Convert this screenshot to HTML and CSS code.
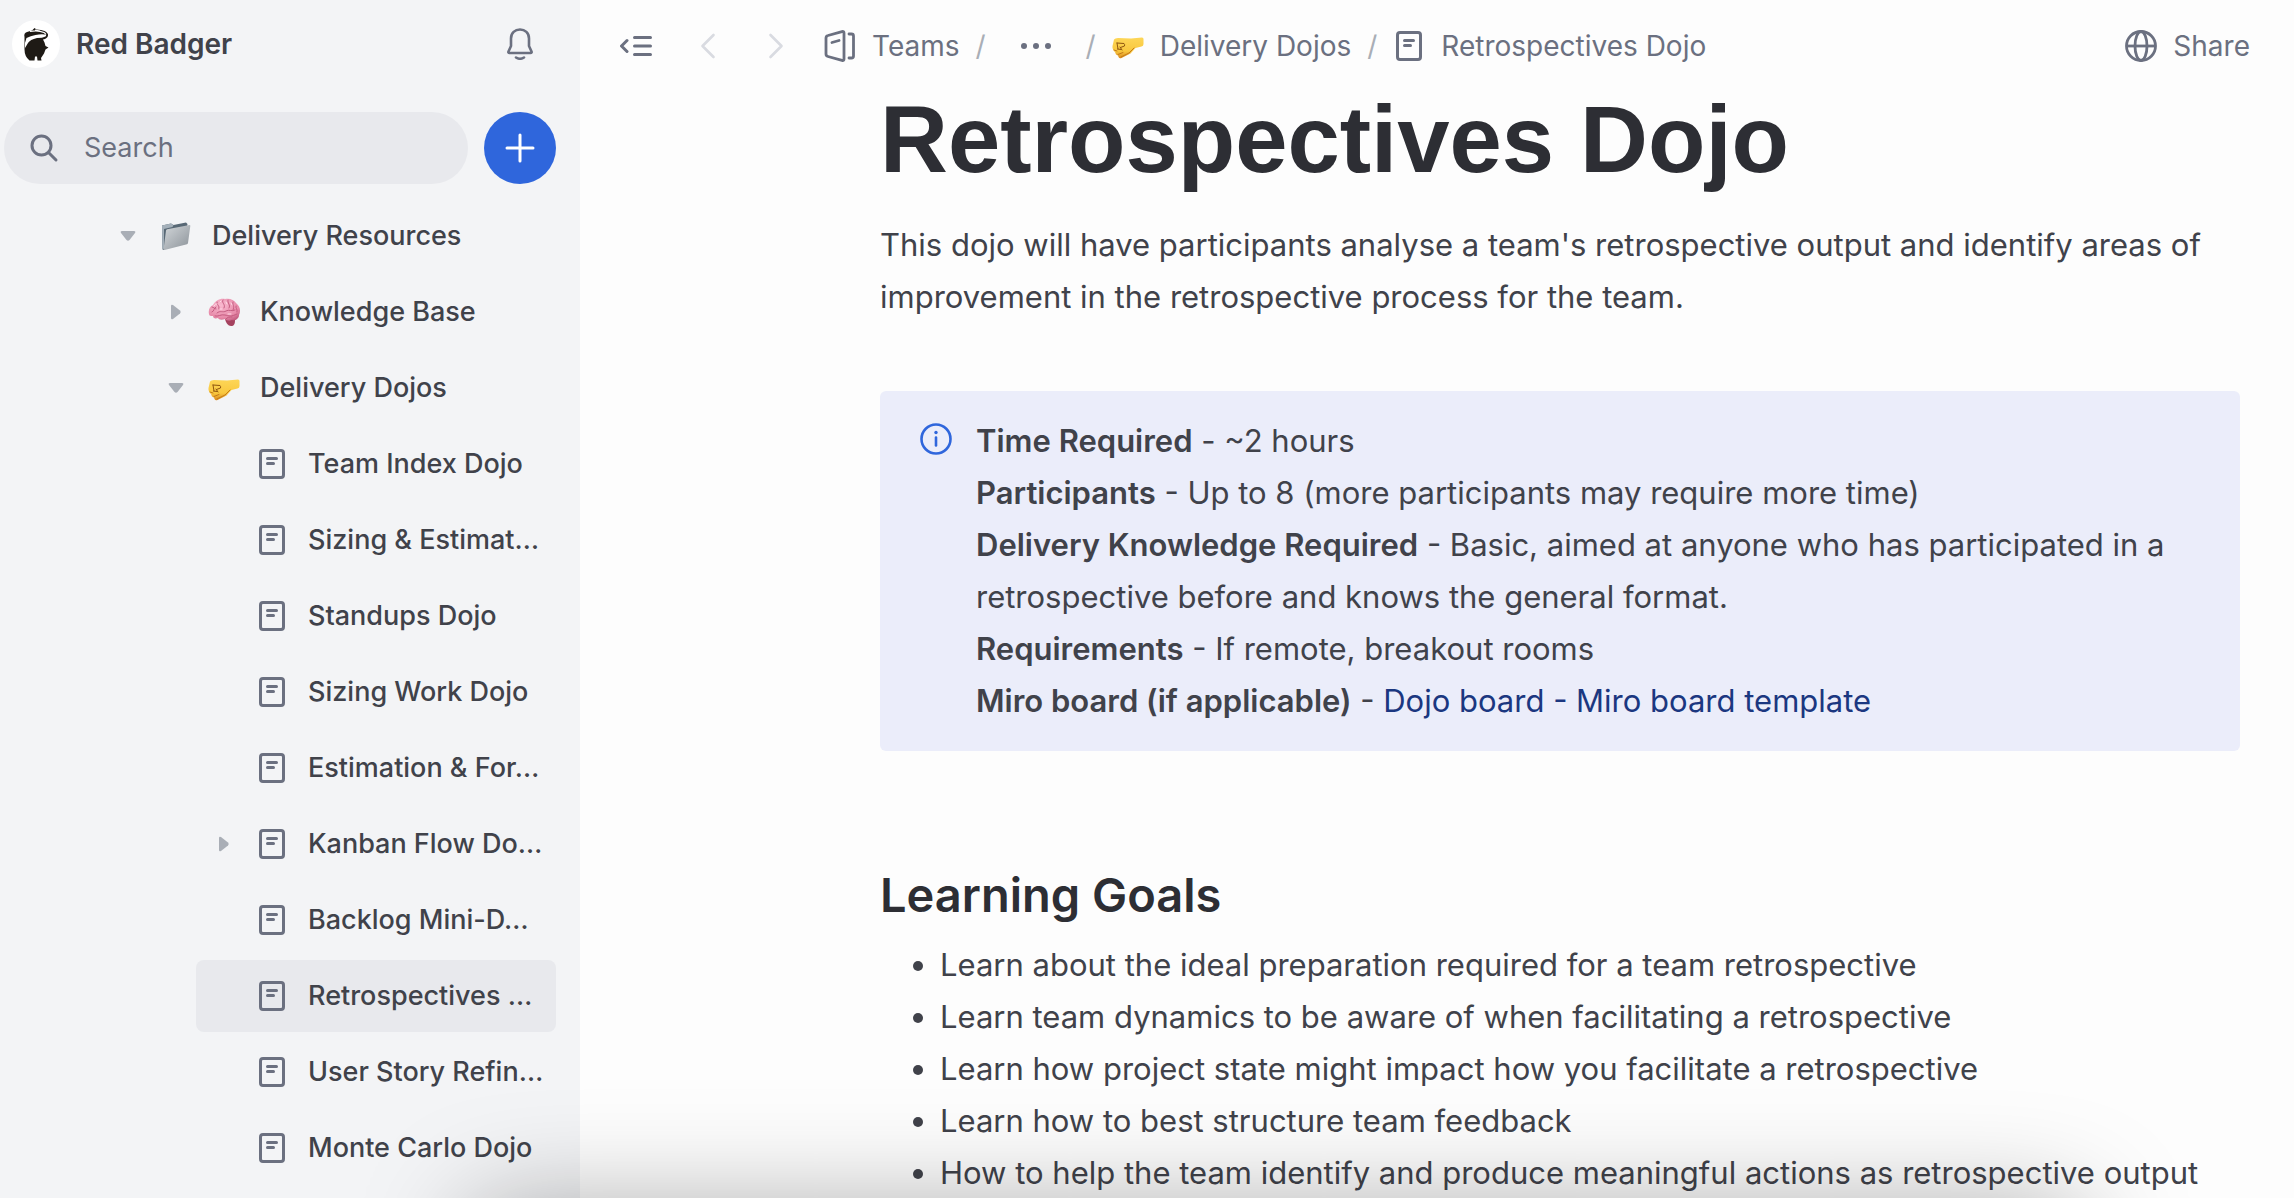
FILE: index.html
```html
<!DOCTYPE html>
<html lang="en">
<head>
<meta charset="utf-8">
<meta name="viewport" content="width=device-width, initial-scale=1">
<title>Retrospectives Dojo</title>
<link rel="stylesheet" href="styles.css">
</head>
<body>
<svg class="sprite" aria-hidden="true">
  <defs>
    <linearGradient id="folder-front" x1="0" y1="0" x2="1" y2="1">
      <stop offset="0" stop-color="#d3d7da"/><stop offset="1" stop-color="#8b9299"/>
    </linearGradient>
    <radialGradient id="brain-fill" cx=".4" cy=".3" r=".8">
      <stop offset="0" stop-color="#f9b9cf"/><stop offset=".7" stop-color="#e78aa9"/><stop offset="1" stop-color="#c0587c"/>
    </radialGradient>
    <linearGradient id="fist-fill" x1="0" y1="0" x2="0" y2="1">
      <stop offset="0" stop-color="#fdd657"/><stop offset=".65" stop-color="#f9c83f"/><stop offset="1" stop-color="#d98a1e"/>
    </linearGradient>
    <symbol id="doc" viewBox="0 0 32 32">
      <g fill="none" stroke="currentColor" stroke-width="3" stroke-linecap="round" stroke-linejoin="round">
        <rect x="4.500" y="2.500" width="23" height="27" rx="2.500"/><path d="M11.500 10.500h9M11.500 15.500h6"/>
      </g>
    </symbol>
    <symbol id="caret-down" viewBox="0 0 16 16">
      <path d="M2 3h12q2 0 1 2L9.500 12q-1.500 1.500-3 0L1 5Q0 3 2 3z" fill="#a9aeb6"/>
    </symbol>
    <symbol id="caret-right" viewBox="0 0 16 16">
      <path d="M3 2v12q0 2 2 1l7-5.500q1.500-1.500 0-3L5 1Q3 0 3 2z" fill="#a9aeb6"/>
    </symbol>
    <symbol id="folder" viewBox="0 0 32 32">
      <path d="M2 5.500 11 3.500l2.500 1.500L26 2.500l1.500 1.500-1 6L4 30l-1.500-.5z" fill="#586875"/>
      <path d="M2 5.500 11 3.500l2.500 1.500-1 2L4 9v20l-1.500-.5z" fill="#a4b0ba"/>
      <path d="M6 10.500q.2-1 1.200-1.300L29.500 5q1 0 .8 1L28 23q-.2 1-1 1.300L4.500 30q-1 .1-.9-1z" fill="url(#folder-front)"/>
    </symbol>
    <symbol id="brain" viewBox="0 0 32 32">
      <path d="M17 23c1 4 3 7 6 7 3 0 4-2 4-6z" fill="#a5425f"/>
      <path d="M1 18c-1-4 1-8 4-9C7 5 12 2 17 3c5-1 9 1 11 4 4 3 5 8 3 12 0 4-4 6-7 5-2 1-5 1-7-1-3 1-6 1-7-1-3 1-5 0-5-2-2 0-4 0-4-2z" fill="url(#brain-fill)"/>
      <g fill="none" stroke="#c45c80" stroke-width="1" stroke-linecap="round">
        <path d="M4 16c3-1 1-4 4-5M9 6c-1 3 3 3 2 7M15 4c-2 3 3 4 1 8M20 4c-1 3 3 5 1 8M25 6c-1 3 2 4 0 8M9 17c3-3 6 0 9-2s6 1 9-1M7 20c3 1 6-2 10-1s6 2 12-1M18 23c1-2 4-2 6-2M4 11c2 0 2 2 4 2M28 10c-1 2 2 3 1 6"/>
      </g>
      <path d="M6 10c1-2 2-2 3-2M12 6l1-1M18 6l1 2M23 7l1 2M12 13l2 0M20 18l3 0" fill="none" stroke="#ffdbe7" stroke-width="1" stroke-linecap="round"/>
    </symbol>
    <symbol id="fist" viewBox="0 0 32 32">
      <path d="M2 9.500Q3 8 6 8l13 .5L30 7.500q1.500 0 1.500 1.500v5q0 2-2 2.500l-6 1.500-5 5.500-9 4.500q-2 1-3-1l-.5-1.500-2-1-1-2.500-1.500-1.500Q0 18 .5 16z" fill="url(#fist-fill)"/>
      <path d="m5 13 7 .5q1 1 .5 2.500l-4 1.500M5 13l1 6M8 17l2 3M5.500 19l3.500.5" fill="none" stroke="#8e560f" stroke-width="1" stroke-linecap="round"/>
      <path d="M2 20l3 1M6 24.500l5-2M9 27l8-4 5-5" fill="none" stroke="#c47a19" stroke-width="1" stroke-linecap="round"/>
    </symbol>
  </defs>
</svg>

<div class="app">
  <aside class="sidebar">
    <header class="workspace">
      <a class="brand" href="#">
        <svg class="brand-logo" viewBox="0 0 48 48" aria-hidden="true">
          <circle cx="24" cy="24" r="24" fill="#fff"/>
          <path d="M12.500 17Q11.500 13 15 12l5-1.500 2.500-2.500 2 1.500q5 0 8 1.500 4 2 3.500 4.500-.5 3-5 4l1.500 3 1 3.500 3 1.500-3 2-1.500 4-3 4.500.5 2.500h-4l-.5-4h-2l-.5 4h-5q-5-4-5-11z" fill="#1e1a15"/>
          <path d="M13 28q-.5-6 1.500-10 4-2 9-3 5-1 9.500-.5 2 .5.500 2-3 1.500-8.500 1.500-7 1.500-9 5z" fill="#fff"/>
          <path d="M18 11.500q8-1.500 14 1 1 .5 2 2M23 10l5 1" fill="none" stroke="#fff" stroke-width="1.200"/>
        </svg>
        <span>Red Badger</span>
      </a>
      <button class="icon-button" type="button" aria-label="Notifications">
        <svg class="icon" viewBox="0 0 32 32" fill="none" stroke="currentColor" stroke-width="2.600" stroke-linejoin="round" stroke-linecap="round" aria-hidden="true">
          <path d="M4.500 23.500 7 18v-7.500C7 5 11 1.500 16 1.500S25 5 25 10.500V18l2.500 5.500q.5 1.500-1 1.500h-21q-1.500 0-1-1.500zM12 29.500q4 2.500 8 0"/>
        </svg>
      </button>
    </header>

    <div class="search-row">
      <label class="search">
        <svg class="icon" viewBox="0 0 32 32" fill="none" stroke="currentColor" stroke-width="3" stroke-linecap="round" aria-hidden="true">
          <circle cx="13.500" cy="13.500" r="9.500"/><path d="m21 21 7 7"/>
        </svg>
        <input type="search" placeholder="Search" aria-label="Search">
      </label>
      <button class="create" type="button" aria-label="Create">
        <svg class="icon" viewBox="0 0 32 32" fill="none" stroke="currentColor" stroke-width="3" stroke-linecap="round" aria-hidden="true"><path d="M16 3v26M3 16h26"/></svg>
      </button>
    </div>

    <nav aria-label="Pages">
      <ul class="tree">
        <li>
          <a class="node" href="#"><span class="toggle"><svg><use href="#caret-down"/></svg></span><svg class="icon"><use href="#folder"/></svg><span class="label">Delivery Resources</span></a>
          <ul class="tree">
            <li><a class="node" href="#"><span class="toggle"><svg><use href="#caret-right"/></svg></span><svg class="icon"><use href="#brain"/></svg><span class="label">Knowledge Base</span></a></li>
            <li>
              <a class="node" href="#"><span class="toggle"><svg><use href="#caret-down"/></svg></span><svg class="icon"><use href="#fist"/></svg><span class="label">Delivery Dojos</span></a>
              <ul class="tree">
                <li><a class="node" href="#"><span class="toggle"></span><svg class="icon"><use href="#doc"/></svg><span class="label">Team Index Dojo</span></a></li>
                <li><a class="node" href="#"><span class="toggle"></span><svg class="icon"><use href="#doc"/></svg><span class="label">Sizing &amp; Estimat…</span></a></li>
                <li><a class="node" href="#"><span class="toggle"></span><svg class="icon"><use href="#doc"/></svg><span class="label">Standups Dojo</span></a></li>
                <li><a class="node" href="#"><span class="toggle"></span><svg class="icon"><use href="#doc"/></svg><span class="label">Sizing Work Dojo</span></a></li>
                <li><a class="node" href="#"><span class="toggle"></span><svg class="icon"><use href="#doc"/></svg><span class="label">Estimation &amp; For…</span></a></li>
                <li><a class="node" href="#"><span class="toggle"><svg><use href="#caret-right"/></svg></span><svg class="icon"><use href="#doc"/></svg><span class="label">Kanban Flow Do…</span></a></li>
                <li><a class="node" href="#"><span class="toggle"></span><svg class="icon"><use href="#doc"/></svg><span class="label">Backlog Mini-D…</span></a></li>
                <li><a class="node current" href="#" aria-current="page"><span class="toggle"></span><svg class="icon"><use href="#doc"/></svg><span class="label">Retrospectives …</span></a></li>
                <li><a class="node" href="#"><span class="toggle"></span><svg class="icon"><use href="#doc"/></svg><span class="label">User Story Refin…</span></a></li>
                <li><a class="node" href="#"><span class="toggle"></span><svg class="icon"><use href="#doc"/></svg><span class="label">Monte Carlo Dojo</span></a></li>
              </ul>
            </li>
          </ul>
        </li>
      </ul>
    </nav>
  </aside>

  <main class="main">
    <header class="topbar">
      <button class="icon-button collapse" type="button" aria-label="Collapse sidebar">
        <svg class="icon" viewBox="0 0 32 32" fill="none" stroke="currentColor" stroke-width="3" stroke-linecap="round" stroke-linejoin="round" aria-hidden="true"><path d="M14.500 7.500h16M14.500 16h16M14.500 24.500h16M7 10.500 1.500 16 7 21.500"/></svg>
      </button>
      <div class="history">
        <button class="icon-button" type="button" aria-label="Back" disabled>
          <svg class="icon" viewBox="0 0 32 32" fill="none" stroke="currentColor" stroke-width="2.600" stroke-linecap="round" stroke-linejoin="round" aria-hidden="true"><path d="M21.500 5 10.500 16l11 11"/></svg>
        </button>
        <button class="icon-button" type="button" aria-label="Forward" disabled>
          <svg class="icon" viewBox="0 0 32 32" fill="none" stroke="currentColor" stroke-width="2.600" stroke-linecap="round" stroke-linejoin="round" aria-hidden="true"><path d="m10.500 5 11 11-11 11"/></svg>
        </button>
      </div>
      <nav class="crumbs" aria-label="Breadcrumb">
        <a class="crumb" href="#">
          <svg class="icon" viewBox="0 0 32 32" fill="none" stroke="currentColor" stroke-width="2.800" stroke-linecap="round" stroke-linejoin="round" aria-hidden="true"><path d="M4 5.500 18 1.600q2-.5 2 1.400v26q0 2-2 1.400L4 26.500Q2 26 2 24V8q0-2 2-2.500zM8 12.500l7-2M25 4h2.500q2 0 2 2v20q0 2-2 2H25"/></svg>
          <span>Teams</span>
        </a>
        <span class="slash">/</span>
        <button class="icon-button more" type="button" aria-label="Show hidden pages">
          <svg class="icon" viewBox="0 0 32 32" fill="currentColor" aria-hidden="true"><circle cx="4" cy="16" r="3"/><circle cx="16" cy="16" r="3"/><circle cx="28" cy="16" r="3"/></svg>
        </button>
        <span class="slash">/</span>
        <a class="crumb" href="#"><svg class="icon"><use href="#fist"/></svg><span>Delivery Dojos</span></a>
        <span class="slash">/</span>
        <a class="crumb" href="#" aria-current="page"><svg class="icon"><use href="#doc"/></svg><span>Retrospectives Dojo</span></a>
      </nav>
      <button class="share" type="button">
        <svg class="icon" viewBox="0 0 32 32" fill="none" stroke="currentColor" stroke-width="2.800" aria-hidden="true"><circle cx="16" cy="16" r="14.500"/><ellipse cx="16" cy="16" rx="6" ry="14.500"/><path d="M1.500 16h29"/></svg>
        <span>Share</span>
      </button>
    </header>

    <article class="page">
      <h1>Retrospectives Dojo</h1>
      <p>This dojo will have participants analyse a team's retrospective output and identify areas of improvement in the retrospective process for the team.</p>
      <section class="callout">
        <svg class="icon info" viewBox="0 0 32 32" fill="none" stroke="currentColor" stroke-width="2.600" stroke-linecap="round" aria-hidden="true"><circle cx="16" cy="16" r="14.500"/><path d="M16 14.500v8"/><circle cx="16" cy="9.500" r="1.700" fill="currentColor" stroke="none"/></svg>
        <div>
          <p><strong>Time Required</strong> - ~2 hours</p>
          <p><strong>Participants</strong> - Up to 8 (more participants may require more time)</p>
          <p><strong>Delivery Knowledge Required</strong> - Basic, aimed at anyone who has participated in a retrospective before and knows the general format.</p>
          <p><strong>Requirements</strong> - If remote, breakout rooms</p>
          <p><strong>Miro board (if applicable)</strong> - <a href="#">Dojo board - Miro board template</a></p>
        </div>
      </section>
      <h2>Learning Goals</h2>
      <ul class="goals">
        <li>Learn about the ideal preparation required for a team retrospective</li>
        <li>Learn team dynamics to be aware of when facilitating a retrospective</li>
        <li>Learn how project state might impact how you facilitate a retrospective</li>
        <li>Learn how to best structure team feedback</li>
        <li>How to help the team identify and produce meaningful actions as retrospective output</li>
      </ul>
    </article>
  </main>
</div>
<div class="window-shadow" aria-hidden="true"></div>
</body>
</html>
```
FILE: styles.css
```css
*, *::before, *::after { box-sizing: border-box; }

body {
  margin: 0;
  overflow: hidden;
  background: #fdfdfd;
  color: #40424a;
  font-family: Inter, "Liberation Sans", sans-serif;
  font-size: 31px;
  line-height: 52px;
}

a { color: inherit; text-decoration: none; }
p, ul { margin: 0; padding: 0; }
ul { list-style: none; }
button, input {
  margin: 0;
  padding: 0;
  border: 0;
  background: none;
  color: inherit;
  font: inherit;
}
svg { display: block; }

.sprite { position: absolute; width: 0; height: 0; }
.icon { flex: none; width: 32px; height: 32px; }
.icon-button { display: grid; place-items: center; color: #6b7080; }
.icon-button:disabled { color: #d9dbe1; }

.app {
  display: grid;
  grid-template-columns: 580px minmax(0, 1fr);
  height: 100vh;
  overflow: hidden;
}

/* Sidebar */
.sidebar {
  padding: 0 24px 0 4px;
  overflow: hidden;
  background: #f3f4f6;
  font-size: 27px;
  line-height: 36px;
}
.workspace {
  display: flex;
  align-items: center;
  justify-content: space-between;
  height: 112px;
  padding: 0 20px 24px 8px;
}
.brand {
  display: flex;
  align-items: center;
  gap: 16px;
  font-size: 28px;
  font-weight: 600;
}
.brand-logo { width: 48px; height: 48px; }

.search-row { display: flex; gap: 16px; margin-bottom: 16px; }
.search {
  display: flex;
  flex: 1;
  align-items: center;
  gap: 24px;
  min-width: 0;
  height: 72px;
  padding: 0 24px;
  border-radius: 36px;
  background: #e8e9ed;
  color: #6b7080;
}
.search input { width: 100%; min-width: 0; outline: 0; appearance: none; }
.search input::placeholder { color: #6b7080; opacity: 1; }
.create {
  display: grid;
  place-items: center;
  width: 72px;
  height: 72px;
  border-radius: 50%;
  background: #2f66dc;
  color: #fff;
}

.tree { display: grid; gap: 4px; }
nav > .tree { margin-left: 96px; }
.tree .tree { margin: 4px 0 0 48px; }
.node {
  display: flex;
  align-items: center;
  height: 72px;
  border-radius: 8px;
  font-weight: 500;
  white-space: nowrap;
}
.node .icon { margin: 0 20px 0 4px; color: #6b7080; }
.toggle { display: grid; flex: none; place-items: center; width: 56px; }
.toggle svg { width: 16px; height: 16px; }
.current { background: #e8e9ed; }

/* Top bar */
.topbar {
  display: flex;
  align-items: center;
  height: 92px;
  padding: 0 44px 0 40px;
  color: #6b7080;
  font-size: 28px;
  line-height: 36px;
}
.collapse { margin-right: 40px; }
.history { display: flex; gap: 36px; margin-right: 32px; }
.crumbs { display: flex; align-items: center; }
.crumb { display: flex; align-items: center; gap: 16px; }
.slash { margin: 0 16px; color: #a9aeb6; }
.more { margin: 0 18px; }
.share { display: flex; align-items: center; gap: 16px; margin-left: auto; }

/* Page */
.page { padding: 0 54px 0 300px; }
h1 {
  margin: 0 0 31px;
  color: #2d2e34;
  font-family: "Liberation Sans", Arial, sans-serif;
  font-size: 94px;
  line-height: 96px;
}
.callout {
  display: flex;
  gap: 24px;
  margin: 68px 0 108px;
  padding: 24px 40px;
  border-radius: 6px;
  background: #ebedfa;
}
.info { margin-top: 8px; color: #2f66dc; }
.callout a { color: #1b3780; }
strong { font-weight: 600; }
h2 {
  margin: 0 0 8px;
  color: #2d2e34;
  font-size: 47px;
  font-weight: 600;
  line-height: 72px;
}
.goals { padding-left: 60px; list-style: disc; }

/* Shadow cast by the window below the viewport edge */
.window-shadow {
  position: fixed;
  top: calc(100% + 12px);
  right: 212px;
  left: 472px;
  height: 200px;
  border-radius: 20px;
  box-shadow: 0 0 110px rgba(0, 0, 0, .35);
  pointer-events: none;
}
```
